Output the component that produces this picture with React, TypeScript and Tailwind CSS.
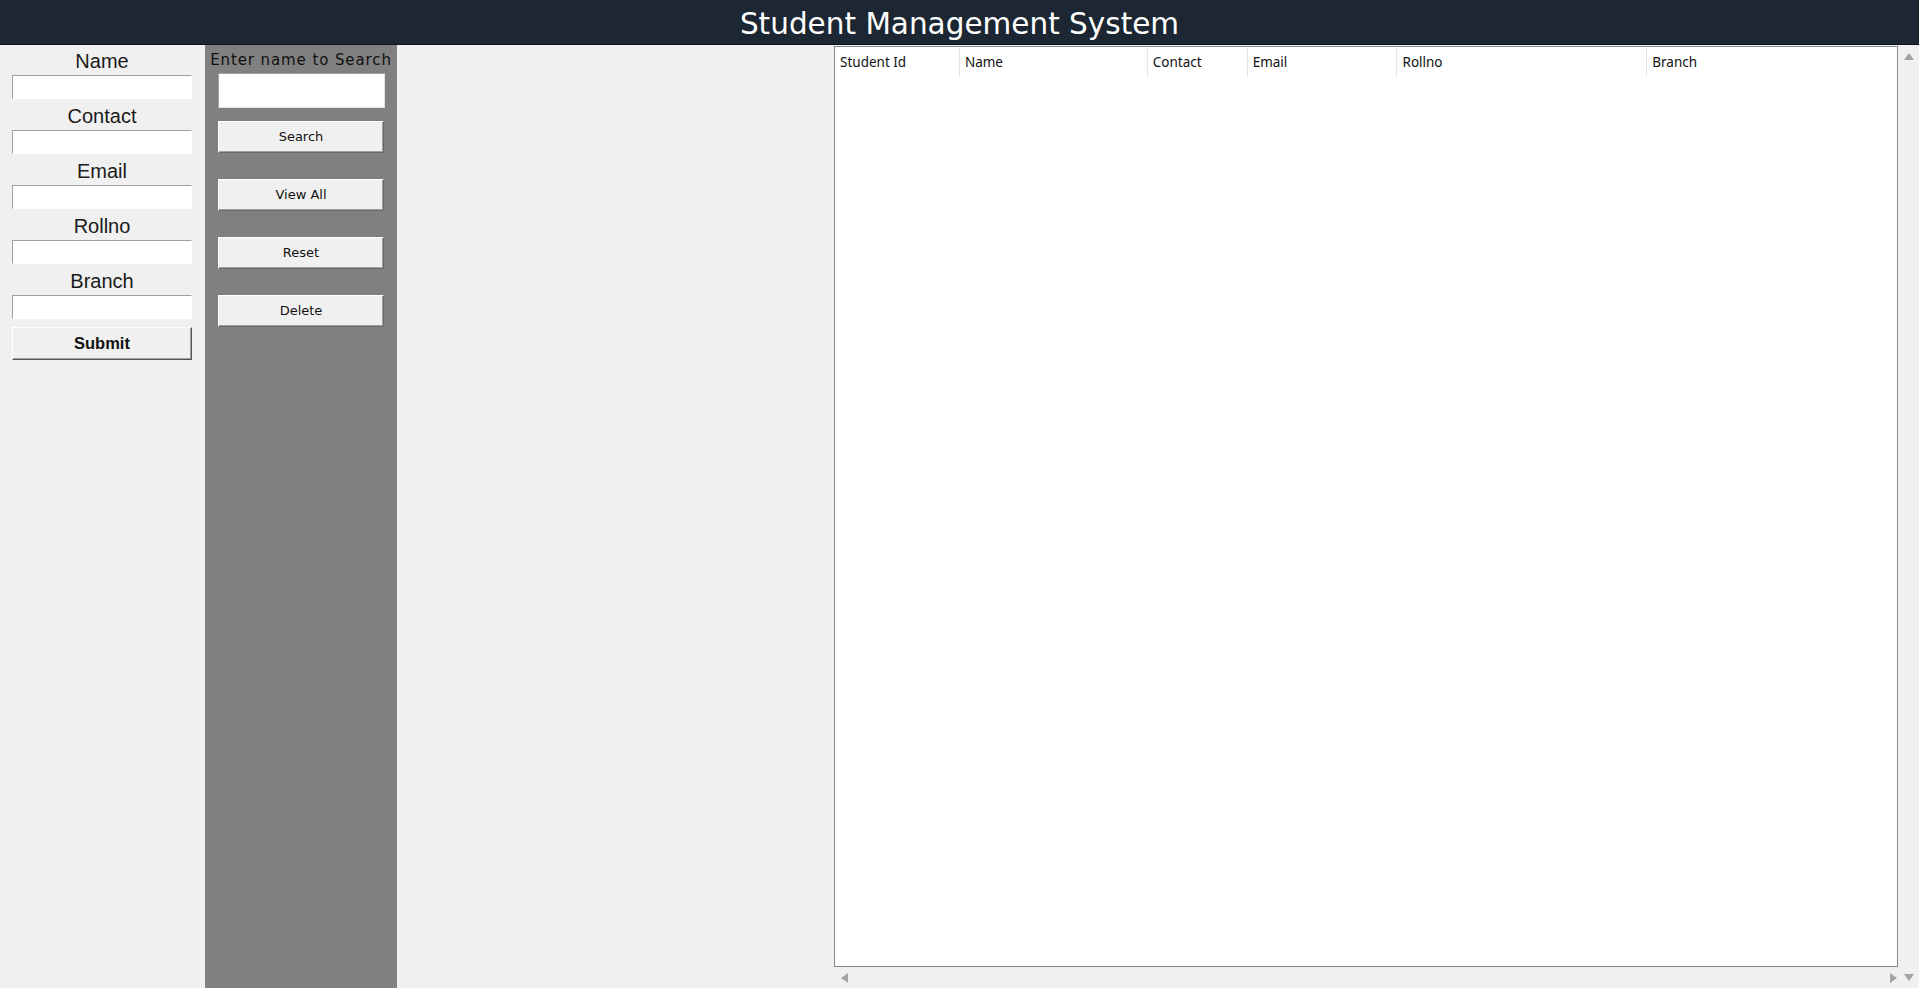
const fields = ["Name", "Contact", "Email", "Rollno", "Branch"]

const columns = [
  { title: "Student Id", width: "w-[125px]" },
  { title: "Name", width: "w-[188px]" },
  { title: "Contact", width: "w-[100px]" },
  { title: "Email", width: "w-[150px]" },
  { title: "Rollno", width: "w-[250px]" },
  { title: "Branch", width: "w-[250px]" },
]

const actions = ["Search", "View All", "Reset", "Delete"]

const Arrow = ({ dir }: { dir: "up" | "down" | "left" | "right" }) => {
  const points = {
    up: "0,8 5,1 10,8",
    down: "0,1 5,8 10,1",
    left: "8,0 1,5 8,10",
    right: "1,0 8,5 1,10",
  }[dir]
  return (
    <svg width="10" height="10" viewBox="0 0 10 10">
      <polygon points={points} fill="#a3a3a3" />
    </svg>
  )
}

const App = () => {
  return (
    <div className="w-[1919px] h-[988px] flex flex-col bg-[#f0f0f0] overflow-hidden">
      {/* title bar */}
      <div className="h-[45px] shrink-0 bg-[#1c2733] border-b border-[#0d141b] flex items-center justify-center">
        <h1 className="text-white text-[29.5px] leading-none font-['DejaVu_Sans',sans-serif] pt-[5px]">
          Student Management System
        </h1>
      </div>

      <div className="flex flex-1 min-h-0">
        {/* entry form */}
        <div className="w-[205px] shrink-0 flex flex-col px-[12px] pr-[13px]">
          {fields.map((f, i) => (
            <div key={f} className="flex flex-col">
              <label
                className={`${i === 0 ? "h-[30px]" : "h-[31px]"} flex items-center justify-center text-[20px] text-[#1a1a1a] font-['Liberation_Sans',Arial,sans-serif] pt-[2px]`}
              >
                {f}
              </label>
              <input
                className="h-[24px] w-[180px] bg-white border-t border-l border-[#a0a0a0] border-b border-r border-b-white border-r-white outline-none"
              />
            </div>
          ))}
          <button className="mt-[8px] h-[33px] w-[180px] bg-[#f0f0f0] border border-t-white border-l-white border-b-[#555] border-r-[#555] shadow-[inset_-1px_-1px_0_#a0a0a0] text-[16.5px] font-bold text-[#111] font-['Liberation_Sans',Arial,sans-serif]">
            Submit
          </button>
        </div>

        {/* search panel */}
        <div className="w-[192px] shrink-0 bg-[#808080] flex flex-col items-center">
          <div className="h-[28px] flex items-center text-[15px] text-[#111] font-['DejaVu_Sans',sans-serif] tracking-[0.9px] pt-[2px] whitespace-nowrap">
            Enter name to Search
          </div>
          <input className="h-[35px] w-[167px] bg-white border-t border-l border-[#a0a0a0] border-b border-r border-b-[#e3e3e3] border-r-[#e3e3e3] outline-none" />
          <div className="flex flex-col gap-[26px] mt-[13px]">
            {actions.map((a) => (
              <button
                key={a}
                className="h-[32px] w-[166px] bg-[#f0f0f0] border border-t-white border-l-white border-b-[#696969] border-r-[#696969] shadow-[inset_-1px_-1px_0_#a0a0a0] text-[13px] text-[#111] font-['DejaVu_Sans',sans-serif]"
              >
                {a}
              </button>
            ))}
          </div>
        </div>

        <div className="flex-1" />

        {/* records table */}
        <div className="w-[1085px] shrink-0 flex flex-col pt-[1px]">
          <div className="flex flex-1 min-h-0">
            <div className="w-[1064px] bg-white border border-[#828790] flex flex-col">
              <div className="flex h-[30px]">
                {columns.map((c, i) => (
                  <div
                    key={c.title}
                    className={`${c.width} h-full flex items-center pl-[5px] text-[13.5px] text-[#111] font-['Noto_Sans',sans-serif] ${i < columns.length - 1 ? "border-r border-[#e5e5e5]" : ""}`}
                  >
                    {c.title}
                  </div>
                ))}
              </div>
            </div>
            <div className="w-[21px] flex flex-col items-center justify-between py-[6px]">
              <Arrow dir="up" />
            </div>
          </div>
          <div className="h-[21px] flex items-center justify-between pl-[6px] pr-[5px]">
            <div className="flex w-[1064px] justify-between pr-[5px]">
              <Arrow dir="left" />
              <Arrow dir="right" />
            </div>
            <Arrow dir="down" />
          </div>
        </div>
      </div>
    </div>
  )
}

export default App
